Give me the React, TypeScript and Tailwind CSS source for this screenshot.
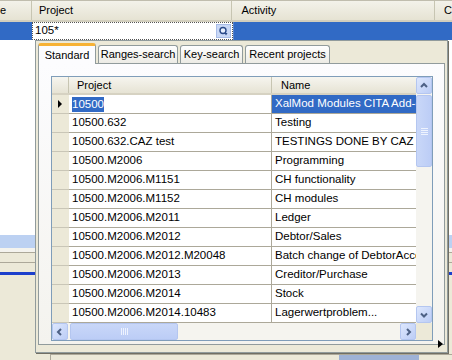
import React from "react"

const rows: [string, string][] = [
  ["10500", "XalMod Modules CITA Add-on"],
  ["10500.632", "Testing"],
  ["10500.632.CAZ test", "TESTINGS DONE BY CAZ"],
  ["10500.M2006", "Programming"],
  ["10500.M2006.M1151", "CH functionality"],
  ["10500.M2006.M1152", "CH modules"],
  ["10500.M2006.M2011", "Ledger"],
  ["10500.M2006.M2012", "Debtor/Sales"],
  ["10500.M2006.M2012.M20048", "Batch change of DebtorAccount"],
  ["10500.M2006.M2013", "Creditor/Purchase"],
  ["10500.M2006.M2014", "Stock"],
  ["10500.M2006.M2014.10483", "Lagerwertproblem..."],
]

function Chevron({ dir }: { dir: "up" | "down" | "left" | "right" }) {
  const d = {
    up: "M2 6 L5 3 L8 6",
    down: "M2 3.5 L5 6.5 L8 3.5",
    left: "M6 2 L3 5 L6 8",
    right: "M4 2 L7 5 L4 8",
  }[dir]
  return (
    <svg width="10" height="10" viewBox="0 0 10 10">
      <path d={d} fill="none" stroke="#4d6185" strokeWidth="2" />
    </svg>
  )
}

function ScrollBtn({ dir }: { dir: "up" | "down" | "left" | "right" }) {
  return (
    <div className="w-[16px] h-[17px] shrink-0 flex items-center justify-center rounded-[2px] border border-[#b4c6f0] bg-gradient-to-br from-[#dde7fd] to-[#bccdf6]">
      <Chevron dir={dir} />
    </div>
  )
}

function Tab({ label, active, w }: { label: string; active?: boolean; w: string }) {
  if (active)
    return (
      <div className={`${w} h-[21px] -mb-px relative z-10 flex items-center justify-center bg-[#fcfcfe] border-x border-[#919b9c] rounded-t-[3px] border-t-[3px] border-t-[#f7b235]`}>
        {label}
      </div>
    )
  return (
    <div className={`${w} h-[18px] flex items-center justify-center border-x border-t border-[#919b9c] rounded-t-[3px] bg-gradient-to-b from-white to-[#ecebe5]`}>
      {label}
    </div>
  )
}

export default function App() {
  return (
    <div className="w-[452px] h-[360px] relative overflow-hidden bg-[#ece9d8] text-[11px] text-black font-['Liberation_Sans',Arial,sans-serif]">
      {/* background grid */}
      <div className="h-[22px] flex border-t border-[#c0bdae] bg-gradient-to-b from-[#f3f2ea] to-[#e6e3d3] border-b-2 border-b-[#d2cebd]">
        <div className="w-[32px] flex items-center border-r border-[#c7c5b2]">e</div>
        <div className="w-[201px] flex items-center pl-[7px] border-r border-[#c7c5b2]">Project</div>
        <div className="w-[203px] flex items-center pl-[9px] border-r border-[#c7c5b2]">Activity</div>
        <div className="flex-1 flex items-center pl-[9px]">C</div>
      </div>
      <div className="h-[18px] flex bg-[#316ac5]">
        <div className="w-[32px]" />
        <div className="w-[201px] flex items-center bg-white border border-dotted border-[#555] pl-[2px] pr-[1px] text-[11.5px]">
          <span className="flex-1">105*</span>
          <div className="w-[15px] h-[14px] flex items-center justify-center bg-[#c9d8f6] border border-[#a9bde8]">
            <svg width="11" height="11" viewBox="0 0 11 11">
              <circle cx="5" cy="4.5" r="3" fill="#e8f0ff" stroke="#2a4a8a" strokeWidth="1.4" />
              <path d="M6.5 7 L8 9.5 L9.5 7 Z" fill="#2a4a8a" />
            </svg>
          </div>
        </div>
        <div className="flex-1 border-l border-[#5a86cf]" />
      </div>
      <div className="h-[195px] bg-white" />
      <div className="h-[13px] bg-[#bcd1f2]" />
      <div className="h-[4px] bg-[#f4f3ee]" />
      <div className="h-px bg-[#aca899]" />
      <div className="h-[9px]" />
      <div className="h-px bg-[#aca899]" />
      <div className="h-[9px]" />
      <div className="h-[3px] bg-[#1c3fcc]" />
      <div className="h-[79px]" />
      <div className="ml-[50px] h-[8px] border-t border-l border-[#aca899] flex">
        <div className="ml-[288px] w-[80px] bg-[#9eb2d6]" />
      </div>

      {/* lookup popup */}
      <div className="absolute left-[35px] top-[40px] w-[413px] h-[313px] border border-[#919b9c] bg-[#ece9d8] p-[2px] shadow-[1px_1px_0_#716f64]">
        <div className="h-[20px] flex items-end gap-[2px]">
          <Tab label="Standard" active w="w-[58px]" />
          <Tab label="Ranges-search" w="w-[80px]" />
          <Tab label="Key-search" w="w-[63px]" />
          <Tab label="Recent projects" w="w-[85px]" />
        </div>
        <div className="h-[282px] border border-[#919b9c] bg-gradient-to-b from-[#fcfcfe] to-[#f4f3ee] pt-[12px] pl-[12px] pr-[11px]">
          <div className="w-[382px] h-[265px] border border-[#7f9db9] bg-white flex flex-col">
            <div className="flex h-[246px]">
              <div className="w-[364px] flex flex-col">
                <div className="h-[18px] flex bg-gradient-to-b from-[#f6f5ef] to-[#e6e3d4] border-b-2 border-[#d6d2c2]">
                  <div className="w-[17px] border-r border-[#c7c5b2]" />
                  <div className="w-[203px] flex items-center pl-[8px] border-r border-[#c7c5b2]">Project</div>
                  <div className="flex-1 flex items-center pl-[9px]">Name</div>
                </div>
                {rows.map(([p, n], i) => (
                  <div key={p} className="h-[19px] flex text-[11.5px]">
                    <div className="w-[17px] bg-[#ece9d8] border-b border-[#c9c6b7] flex items-center justify-center">
                      {i === 0 && (
                        <svg width="5" height="8" viewBox="0 0 5 8">
                          <path d="M0 0 L4 4 L0 8 Z" fill="#000" />
                        </svg>
                      )}
                    </div>
                    <div className="w-[203px] flex items-center pl-[3px] border-b border-r border-[#aca899] whitespace-nowrap overflow-hidden">
                      {i === 0 ? <span className="bg-[#316ac5] text-white leading-[15px]">{p}</span> : p}
                    </div>
                    <div className={`flex-1 flex items-center pl-[3px] border-b border-[#aca899] whitespace-nowrap overflow-hidden ${i === 0 ? "bg-[#316ac5] text-white" : ""}`}>
                      {n}
                    </div>
                  </div>
                ))}
              </div>
              <div className="w-[16px] flex flex-col bg-[#f5f4ef]">
                <ScrollBtn dir="up" />
                <div className="h-[72px] mt-px rounded-[2px] border border-[#b4c6f0] bg-gradient-to-r from-[#c9d7f8] to-[#bccdf6] flex items-center justify-center">
                  <div className="w-[7px] flex flex-col gap-[1px]">
                    <div className="h-px bg-[#eef3fe]" />
                    <div className="h-px bg-[#eef3fe]" />
                    <div className="h-px bg-[#eef3fe]" />
                    <div className="h-px bg-[#eef3fe]" />
                  </div>
                </div>
                <div className="flex-1" />
                <ScrollBtn dir="down" />
              </div>
            </div>
            <div className="h-[17px] flex">
              <div className="w-[364px] flex bg-[#f5f4ef]">
                <ScrollBtn dir="left" />
                <div className="w-[108px] ml-[2px] rounded-[2px] border border-[#b4c6f0] bg-gradient-to-b from-[#c9d7f8] to-[#bccdf6] flex items-center justify-center gap-[1px]">
                  <div className="w-px h-[7px] bg-[#eef3fe]" />
                  <div className="w-px h-[7px] bg-[#eef3fe]" />
                  <div className="w-px h-[7px] bg-[#eef3fe]" />
                  <div className="w-px h-[7px] bg-[#eef3fe]" />
                </div>
                <div className="flex-1" />
                <ScrollBtn dir="right" />
              </div>
              <div className="flex-1 bg-[#ece9d8]" />
            </div>
          </div>
        </div>
        <svg className="absolute right-[4px] bottom-[4px]" width="5" height="8" viewBox="0 0 5 8">
          <path d="M0 0 L5 4 L0 8 Z" fill="#000" />
        </svg>
      </div>
    </div>
  )
}
